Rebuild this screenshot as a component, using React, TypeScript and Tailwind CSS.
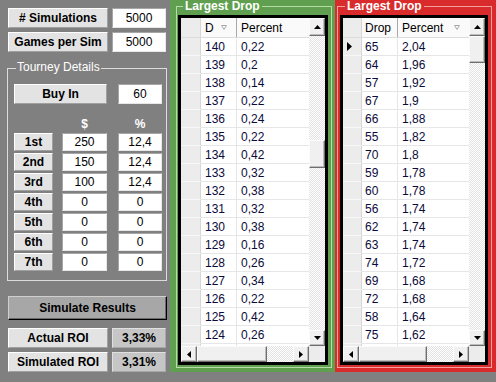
import React from "react";

const F = "font-[family-name:'Liberation_Sans',Arial,sans-serif]";

const GREEN: [string, string][] = [
  ["140", "0,22"], ["139", "0,2"], ["138", "0,14"], ["137", "0,22"], ["136", "0,24"],
  ["135", "0,22"], ["134", "0,42"], ["133", "0,32"], ["132", "0,38"], ["131", "0,32"],
  ["130", "0,38"], ["129", "0,16"], ["128", "0,26"], ["127", "0,34"], ["126", "0,22"],
  ["125", "0,42"], ["124", "0,26"], ["", ""],
];
const RED: [string, string][] = [
  ["65", "2,04"], ["64", "1,96"], ["57", "1,92"], ["67", "1,9"], ["66", "1,88"],
  ["55", "1,82"], ["70", "1,8"], ["59", "1,78"], ["60", "1,78"], ["56", "1,74"],
  ["62", "1,74"], ["63", "1,74"], ["74", "1,72"], ["69", "1,68"], ["72", "1,68"],
  ["58", "1,64"], ["75", "1,62"], ["", ""],
];

function Raised({ className = "", children }: { className?: string; children?: React.ReactNode }) {
  return (
    <div
      className={
        "flex items-center justify-center bg-[#e3e3e3] border border-t-white border-l-white border-b-[#a0a0a0] border-r-[#a0a0a0] font-bold text-black " +
        className
      }
    >
      {children}
    </div>
  );
}

function Edit({ className = "", children }: { className?: string; children?: React.ReactNode }) {
  return (
    <div
      className={
        "flex items-center justify-center bg-white border border-t-[#a6a6a6] border-l-[#a6a6a6] border-b-[#e8e8e8] border-r-[#e8e8e8] text-black " +
        className
      }
    >
      {children}
    </div>
  );
}

function Arrow({ dir }: { dir: "up" | "down" | "left" | "right" }) {
  if (dir === "up")
    return (
      <svg width="7" height="4" viewBox="0 0 7 4"><polygon points="3.5,0 7,4 0,4" fill="#000" /></svg>
    );
  if (dir === "down")
    return (
      <svg width="7" height="4" viewBox="0 0 7 4"><polygon points="0,0 7,0 3.5,4" fill="#000" /></svg>
    );
  if (dir === "left")
    return (
      <svg width="4" height="7" viewBox="0 0 4 7"><polygon points="4,0 4,7 0,3.5" fill="#000" /></svg>
    );
  return (
    <svg width="4" height="7" viewBox="0 0 4 7"><polygon points="0,0 0,7 4,3.5" fill="#000" /></svg>
  );
}

function SBtn({ dir, className = "" }: { dir?: "up" | "down" | "left" | "right"; className?: string }) {
  return (
    <div
      className={
        "shrink-0 flex items-center justify-center bg-[#f0f0f0] border border-t-[#fbfbfb] border-l-[#fbfbfb] border-b-[#6e6e6e] border-r-[#6e6e6e] shadow-[inset_-1px_-1px_0_#bcbcbc] " +
        className
      }
    >
      {dir ? <Arrow dir={dir} /> : null}
    </div>
  );
}

function SortGlyph() {
  return (
    <svg width="6" height="5" viewBox="0 0 6 5" className="ml-auto mr-[9px] shrink-0">
      <polygon points="0.5,0.5 5.5,0.5 3,4.5" fill="none" stroke="#a8a8a8" strokeWidth="1" />
    </svg>
  );
}

const TRACK =
  "bg-[image:repeating-conic-gradient(#ffffff_0%_25%,#e2e2e2_0%_50%)] bg-[length:2px_2px]";

function Grid({
  rows,
  rhW,
  c1W,
  h1,
  sortFirst,
  thumbV,
  thumbH,
  indicator,
  c1Pad,
  c2Pad,
}: {
  rows: [string, string][];
  rhW: string;
  c1W: string;
  h1: string;
  sortFirst: boolean;
  thumbV: string;
  thumbH: string;
  indicator: boolean;
  c1Pad: string;
  c2Pad: string;
}) {
  return (
    <div className="flex-1 flex flex-col border-[3px] border-black bg-white min-w-0">
      <div className="flex-1 flex min-h-0">
        <div className="flex-1 overflow-hidden flex flex-col min-w-0">
          <div className="flex h-[20px] shrink-0 border-b border-[#dcdcdc] bg-[#fafafa] text-black">
            <div className={"shrink-0 bg-[#ececec] border-r border-[#d6d6d6] " + rhW} />
            <div className={"shrink-0 flex items-center border-r border-[#a8a8a8] " + c1W + " " + c1Pad}>
              <span>{h1}</span>
              {sortFirst ? <SortGlyph /> : null}
            </div>
            <div className={"flex-1 flex items-center " + c2Pad}>
              <span>Percent</span>
              {!sortFirst ? <SortGlyph /> : null}
            </div>
          </div>
          {rows.map(([a, b], i) => (
            <div key={i} className="flex h-[18px] shrink-0 text-[#0b0b3a]">
              <div
                className={
                  "shrink-0 flex items-center pl-[4px] bg-[#ececec] border-b border-r border-b-[#f7f7f7] border-r-[#d6d6d6] " +
                  rhW
                }
              >
                {indicator && i === 0 ? (
                  <svg width="5" height="9" viewBox="0 0 5 9"><polygon points="0,0 5,4.5 0,9" fill="#000" /></svg>
                ) : null}
              </div>
              <div className={"shrink-0 flex items-center border-b border-r border-[#e6e6e6] " + c1W + " " + c1Pad}>
                {a}
              </div>
              <div className={"flex-1 flex items-center border-b border-[#e6e6e6] " + c2Pad}>{b}</div>
            </div>
          ))}
        </div>
        <div className="w-[16px] shrink-0 flex flex-col">
          <SBtn dir="up" className="h-[18px]" />
          <div className={"flex-1 flex flex-col " + TRACK}>
            <SBtn className={thumbV} />
          </div>
          <SBtn dir="down" className="h-[16px]" />
        </div>
      </div>
      <div className="flex h-[16px] shrink-0">
        <SBtn dir="left" className="w-[16px]" />
        <SBtn className={thumbH} />
        <div className={"flex-1 " + TRACK} />
        <SBtn dir="right" className="w-[16px]" />
        <div className="w-[16px] shrink-0 bg-[#ececec]" />
      </div>
    </div>
  );
}

export default function App() {
  const places = ["1st", "2nd", "3rd", "4th", "5th", "6th", "7th"];
  const dollars = ["250", "150", "100", "0", "0", "0", "0"];
  const pcts = ["12,4", "12,4", "12,4", "0", "0", "0", "0"];
  return (
    <div className={"w-[496px] h-[382px] bg-[#808080] flex overflow-hidden text-[12px] leading-[14px] " + F}>
      {/* Left controls */}
      <div className="w-[170px] shrink-0 flex flex-col pl-[8px] pt-[8px]">
        <div className="flex gap-[4px] h-[20px]">
          <Raised className="w-[100px]"># Simulations</Raised>
          <Edit className="w-[54px]">5000</Edit>
        </div>
        <div className="flex gap-[4px] h-[20px] mt-[4px]">
          <Raised className="w-[100px]">Games per Sim</Raised>
          <Edit className="w-[54px]">5000</Edit>
        </div>

        <div className="relative mt-[16px] -ml-[1px] w-[160px] h-[213px] border border-[#dcdcdc] pt-[15px] pl-[6px]">
          <span className="absolute left-[8px] -top-[9px] px-[1px] bg-[#808080] text-white">Tourney Details</span>
          <div className="flex h-[20px]">
            <Raised className="w-[93px]">Buy In</Raised>
            <Edit className="ml-[11px] w-[44px]">60</Edit>
          </div>
          <div className="flex h-[16px] mt-[12px] items-center font-bold text-white">
            <div className="w-[39px]" />
            <div className="ml-[9px] w-[45px] text-center">$</div>
            <div className="ml-[11px] w-[44px] text-center">%</div>
          </div>
          <div className="flex flex-col gap-[2px] mt-[1px]">
            {places.map((p, i) => (
              <div key={p} className="flex h-[18px]">
                <Raised className="w-[39px]">{p}</Raised>
                <Edit className="ml-[9px] w-[45px]">{dollars[i]}</Edit>
                <Edit className="ml-[11px] w-[44px]">{pcts[i]}</Edit>
              </div>
            ))}
          </div>
        </div>

        <div className="mt-[15px] h-[24px] w-[159px] flex items-center justify-center bg-[#a7a7a7] border border-t-[#cfcfcf] border-l-[#cfcfcf] border-b-black border-r-black shadow-[inset_-1px_-1px_0_#6a6a6a] font-bold text-black">
          Simulate Results
        </div>

        <div className="flex gap-[4px] h-[20px] mt-[8px]">
          <Raised className="w-[100px]">Actual ROI</Raised>
          <div className="w-[54px] flex items-center justify-center bg-[#c6c6c6] border border-t-[#e0e0e0] border-l-[#e0e0e0] border-b-[#a8a8a8] border-r-[#a8a8a8] font-bold text-black">
            3,33%
          </div>
        </div>
        <div className="flex gap-[4px] h-[20px] mt-[4px]">
          <Raised className="w-[100px]">Simulated ROI</Raised>
          <div className="w-[54px] flex items-center justify-center bg-[#c6c6c6] border border-t-[#e0e0e0] border-l-[#e0e0e0] border-b-[#a8a8a8] border-r-[#a8a8a8] font-bold text-black">
            3,31%
          </div>
        </div>
      </div>

      {/* Green panel */}
      <div className="w-[165px] h-[372px] shrink-0 flex bg-[#609f4f] pt-[6px] pl-[6px] pr-[3px] pb-[4px]">
        <div className="relative flex-1 flex border border-[#b6dca8] pt-[8px] pl-[1px] pr-[3px] pb-[2px] min-w-0">
          <span className="absolute left-[6px] -top-[8px] px-[2px] bg-[#609f4f] text-white font-bold">
            Largest Drop
          </span>
          <Grid
            rows={GREEN}
            rhW="w-[20px]"
            c1W="w-[36px]"
            h1="D"
            sortFirst={true}
            thumbV="mt-[104px] h-[28px]"
            thumbH="w-[70px]"
            indicator={false}
            c1Pad="pl-[4px]"
            c2Pad="pl-[4px]"
          />
        </div>
      </div>

      {/* Red panel */}
      <div className="w-[161px] h-[372px] shrink-0 flex bg-[#d92b2b] pt-[6px] pl-[2px] pr-[4px] pb-[4px]">
        <div className="relative flex-1 flex border border-[#f3a0a0] pt-[8px] pl-[2px] pr-[3px] pb-[2px] min-w-0">
          <span className="absolute left-[7px] -top-[8px] px-[2px] bg-[#d92b2b] text-white font-bold">
            Largest Drop
          </span>
          <Grid
            rows={RED}
            rhW="w-[19px]"
            c1W="w-[36px]"
            h1="Drop"
            sortFirst={false}
            thumbV="mt-[0px] h-[27px]"
            thumbH="w-[68px]"
            indicator={true}
            c1Pad="pl-[3px]"
            c2Pad="pl-[4px]"
          />
        </div>
      </div>
    </div>
  );
}
